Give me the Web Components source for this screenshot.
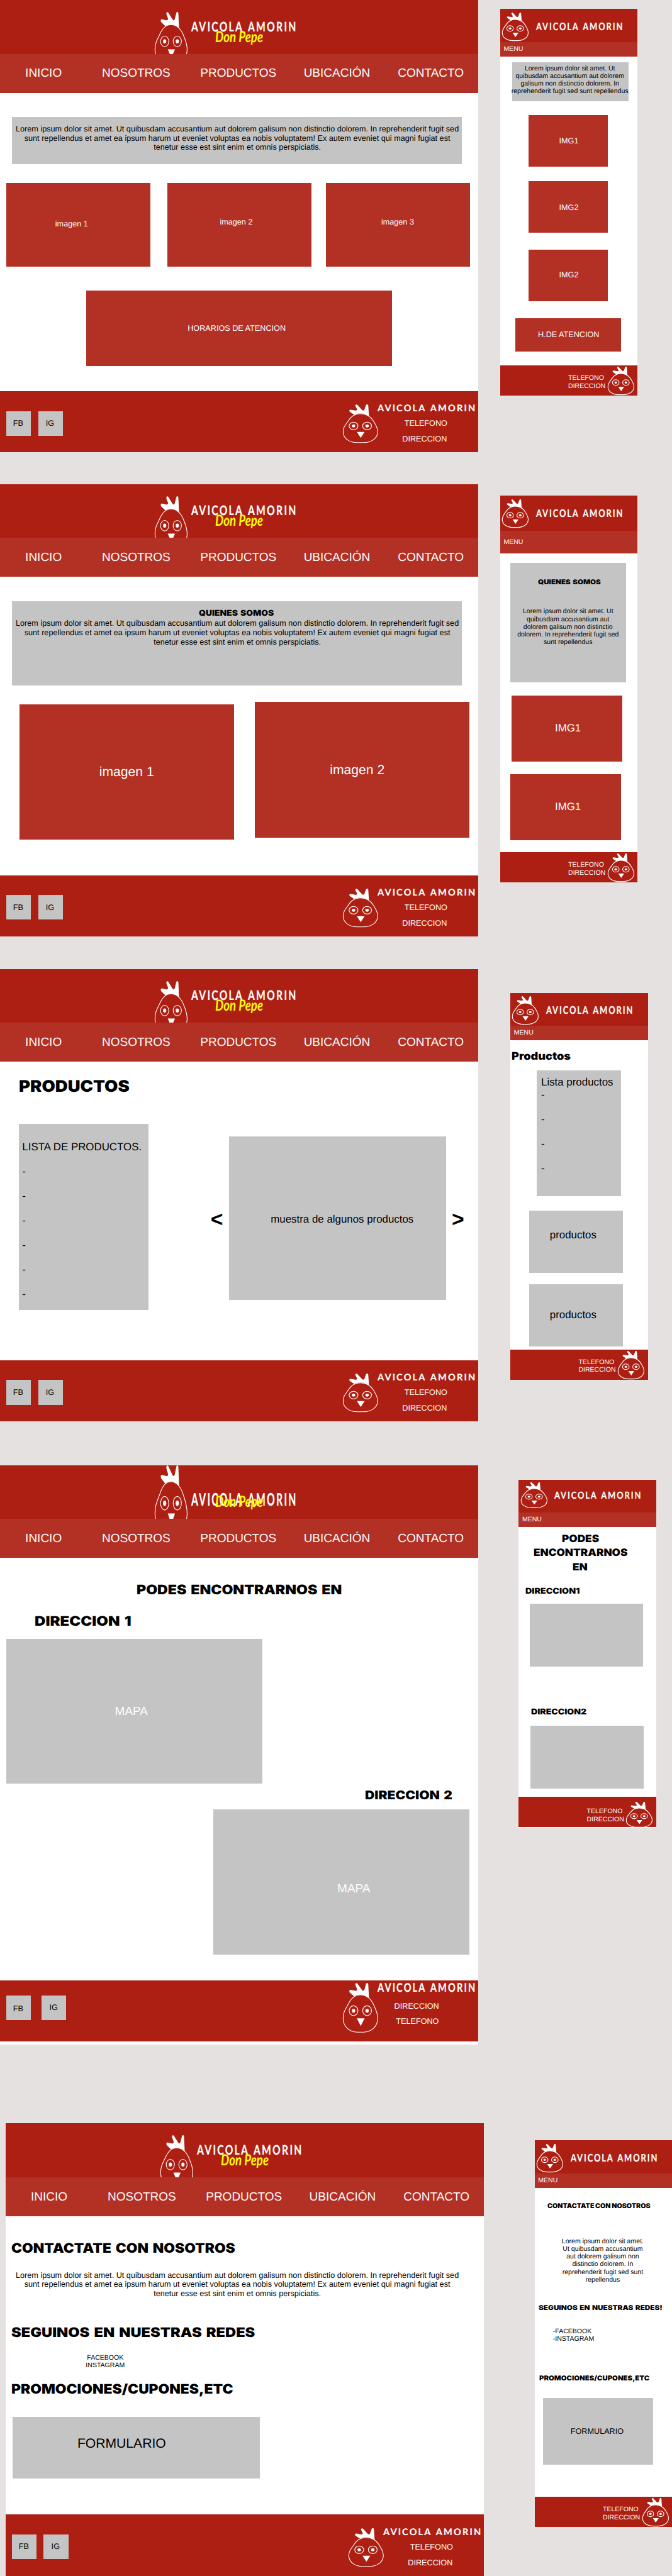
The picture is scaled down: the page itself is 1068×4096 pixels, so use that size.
<!DOCTYPE html>
<html lang="es">
<head>
<meta charset="utf-8">
<title>Avicola Amorin - wireframes</title>
<style>
  /* 1rem = 100 design units */
  html { font-size: 52.78px; background: #e5e1e0; overflow: hidden; }
  body { margin: 0; font-family: "Liberation Sans", Arial, sans-serif; color: #000; overflow: hidden; text-rendering: geometricPrecision; }
</style>
</head>
<body>
<wf-board>
  <wf-desktop slot="desktop">
    <wf-box style="--x:36;--y:73;--w:1354;--h:142"><wf-text center style="--y:22;--w:1357;--s:24;--l:28">Lorem ipsum dolor sit amet. Ut quibusdam accusantium aut dolorem galisum non distinctio dolorem. In reprehenderit fugit sed<br>sunt repellendus et amet ea ipsum harum ut eveniet voluptas ea nobis voluptatem! Ex autem eveniet qui magni fugiat est<br>tenetur esse est sint enim et omnis perspiciatis.</wf-text></wf-box>
    <wf-row style="--y:56">
      <wf-box red style="--x:19.4;--w:434;--h:252"><wf-text style="--x:147;--y:113;--s:24">imagen 1</wf-text></wf-box>
      <wf-box red style="--x:50.6;--w:434;--h:252"><wf-text style="--x:158;--y:107;--s:24">imagen 2</wf-text></wf-box>
      <wf-box red style="--x:43;--w:434;--h:252"><wf-text style="--x:167;--y:107;--s:24">imagen 3</wf-text></wf-box>
    </wf-row>
    <wf-box red style="--x:259;--y:73;--w:922;--h:226"><wf-text style="--x:306;--y:101;--s:24">HORARIOS DE ATENCION</wf-text></wf-box>
  </wf-desktop>

  <wf-desktop slot="desktop" style="--y:95">
    <wf-box style="--x:36;--y:73.4;--w:1354;--h:253">
      <wf-heading style="--x:562.5;--y:26.6;--w:226;--s:24">QUIENES SOMOS</wf-heading>
      <wf-text center style="--y:3;--w:1357;--s:24;--l:28">Lorem ipsum dolor sit amet. Ut quibusdam accusantium aut dolorem galisum non distinctio dolorem. In reprehenderit fugit sed<br>sunt repellendus et amet ea ipsum harum ut eveniet voluptas ea nobis voluptatem! Ex autem eveniet qui magni fugiat est<br>tenetur esse est sint enim et omnis perspiciatis.</wf-text>
    </wf-box>
    <wf-row style="--y:51">
      <wf-box red style="--x:59;--y:7;--w:646.5;--h:408"><wf-text style="--x:240;--y:184;--s:40">imagen 1</wf-text></wf-box>
      <wf-box red style="--x:61;--w:647;--h:408"><wf-text style="--x:227;--y:184;--s:40">imagen 2</wf-text></wf-box>
    </wf-row>
  </wf-desktop>

  <wf-desktop slot="desktop" style="--y:98">
    <wf-heading style="--x:56;--y:50.5;--w:333;--s:48">PRODUCTOS</wf-heading>
    <wf-row style="--y:89">
      <wf-box style="--x:56.4;--w:390;--h:561"><wf-text style="--x:10.6;--y:31.5;--s:32;--l:74">LISTA DE PRODUCTOS.<br>-<br>-<br>-<br>-<br>-<br>-</wf-text></wf-box>
      <wf-text bold style="--x:188;--y:257;--w:37.4;--s:64">&lt;</wf-text>
      <wf-box style="--x:18;--y:36.6;--w:653;--h:493"><wf-text style="--x:125.5;--y:236.5;--s:32">muestra de algunos productos</wf-text></wf-box>
      <wf-text bold style="--x:17.5;--y:257;--w:37.4;--s:64">&gt;</wf-text>
    </wf-row>
  </wf-desktop>

  <wf-desktop slot="desktop" variant="tall" style="--y:132">
    <wf-heading style="--x:411;--y:77;--w:618;--s:40">PODES ENCONTRARNOS EN</wf-heading>
    <wf-heading style="--x:105;--y:55.4;--w:291;--s:40">DIRECCION 1</wf-heading>
    <wf-box style="--x:19.4;--y:30.6;--w:770;--h:437"><wf-text light style="--x:326.6;--y:201;--s:36">MAPA</wf-text></wf-box>
    <wf-heading style="--x:1098;--y:16;--w:263;--s:36">DIRECCION 2</wf-heading>
    <wf-box style="--x:642.7;--y:25.5;--w:771;--h:437"><wf-text light style="--x:373;--y:221.5;--s:36">MAPA</wf-text></wf-box>
  </wf-desktop>

  <wf-desktop slot="desktop" style="--y:237;--x:17">
    <wf-heading style="--x:18;--y:78.7;--w:674;--s:40">CONTACTATE CON NOSOTROS</wf-heading>
    <wf-text center style="--x:20.5;--y:45.7;--w:1354;--s:24;--l:28">Lorem ipsum dolor sit amet. Ut quibusdam accusantium aut dolorem galisum non distinctio dolorem. In reprehenderit fugit sed<br>sunt repellendus et amet ea ipsum harum ut eveniet voluptas ea nobis voluptatem! Ex autem eveniet qui magni fugiat est<br>tenetur esse est sint enim et omnis perspiciatis.</wf-text>
    <wf-heading style="--x:18;--y:82.8;--w:734;--s:40">SEGUINOS EN NUESTRAS REDES</wf-heading>
    <wf-text center style="--x:200;--y:44.5;--w:200;--s:20;--l:23">FACEBOOK<br>INSTAGRAM</wf-text>
    <wf-heading style="--x:17.5;--y:39.7;--w:668;--s:40">PROMOCIONES/CUPONES,ETC</wf-heading>
    <wf-box style="--x:21;--y:63.6;--w:743.6;--h:186"><wf-text style="--x:195;--y:59.5;--s:40">FORMULARIO</wf-text></wf-box>
  </wf-desktop>

  <wf-mobile slot="mobile" style="--y:26.7">
    <wf-box style="--x:37;--y:18;--w:349;--h:117"><wf-text center style="--x:-4;--y:6.7;--w:354;--s:20;--l:23">Lorem ipsum dolor sit amet. Ut<br>quibusdam accusantium aut dolorem<br>galisum non distinctio dolorem. In<br>reprehenderit fugit sed sunt repellendus</wf-text></wf-box>
    <wf-box red style="--x:85;--y:41.6;--w:239;--h:156"><wf-text style="--x:92.4;--y:66;--s:24">IMG1</wf-text></wf-box>
    <wf-box red style="--x:85;--y:42.4;--w:239;--h:156"><wf-text style="--x:92.4;--y:68.3;--s:24">IMG2</wf-text></wf-box>
    <wf-box red style="--x:85;--y:51;--w:239;--h:156"><wf-text style="--x:92.4;--y:65.2;--s:24">IMG2</wf-text></wf-box>
    <wf-box red style="--x:46;--y:51;--w:318;--h:99.6"><wf-text style="--x:68;--y:37.7;--s:24">H.DE ATENCION</wf-text></wf-box>
  </wf-mobile>

  <wf-mobile slot="mobile" style="--y:301.4;--head:106;--nav:67.5;--menu:24.7">
    <wf-box style="--x:30;--y:28;--w:349;--h:361">
      <wf-heading style="--x:83.5;--y:49.4;--w:189;--s:20">QUIENES SOMOS</wf-heading>
      <wf-text center style="--y:66.8;--w:349;--s:20;--l:23">Lorem ipsum dolor sit amet. Ut<br>quibusdam accusantium aut<br>dolorem galisum non distinctio<br>dolorem. In reprehenderit fugit sed<br>sunt repellendus</wf-text>
    </wf-box>
    <wf-box red style="--x:34;--y:40;--w:334;--h:198.5"><wf-text style="--x:131;--y:83.5;--s:32">IMG1</wf-text></wf-box>
    <wf-box red style="--x:30;--y:37.7;--w:334;--h:198.5"><wf-text style="--x:135;--y:83.5;--s:32">IMG1</wf-text></wf-box>
  </wf-mobile>

  <wf-mobile slot="mobile" style="--y:332.1;--x:31">
    <wf-heading style="--x:3.5;--y:34.4;--w:178;--s:32">Productos</wf-heading>
    <wf-box style="--x:80;--y:24;--w:254;--h:379"><wf-text style="--x:12.5;--y:18.2;--s:32;--l:37">Lista productos<br>-<br><br>-<br><br>-<br><br>-</wf-text></wf-box>
    <wf-box style="--x:57;--y:43;--w:281;--h:187.5"><wf-text style="--x:61.6;--y:59.2;--s:32">productos</wf-text></wf-box>
    <wf-box style="--x:57;--y:35.3;--w:281;--h:187.5"><wf-text style="--x:61.6;--y:77.2;--s:32">productos</wf-text></wf-box>
  </wf-mobile>

  <wf-mobile slot="mobile" style="--y:301.4;--x:56;--main:956;--tail:2;--chick:77;--chick-top:9;--word-top:37;--word-h:21;--foot-top:14;--contact-top:33.6">
    <wf-heading style="--x:130;--y:20.6;--w:112;--s:30">PODES</wf-heading>
    <wf-heading style="--x:44.5;--y:12.3;--w:283;--s:30">ENCONTRARNOS</wf-heading>
    <wf-heading style="--x:163;--y:12.3;--w:45;--s:30">EN</wf-heading>
    <wf-heading style="--x:20;--y:48.4;--w:164;--s:24">DIRECCION1</wf-heading>
    <wf-box style="--x:34;--y:22.7;--w:341;--h:189.4"></wf-box>
    <wf-heading style="--x:37.5;--y:126.6;--w:167;--s:24">DIRECCION2</wf-heading>
    <wf-box style="--x:36;--y:29;--w:341;--h:189.4"></wf-box>
  </wf-mobile>

  <wf-mobile slot="mobile" style="--y:941.2;--x:104">
    <wf-heading style="--x:37.5;--y:46.2;--w:310;--s:20;word-spacing:-.04em">CONTACTATE CON NOSOTROS</wf-heading>
    <wf-text center style="--x:5;--y:84.1;--w:400;--s:20;--l:23">Lorem ipsum dolor sit amet.<br>Ut quibusdam accusantium<br>aut dolorem galisum non<br>distinctio dolorem. In<br>reprehenderit fugit sed sunt<br>repellendus</wf-text>
    <wf-heading style="--x:11.5;--y:64.7;--w:373;--s:20">SEGUINOS EN NUESTRAS REDES!</wf-heading>
    <wf-text style="--x:55;--y:48.7;--s:20;--l:23">-FACEBOOK<br>-INSTAGRAM</wf-text>
    <wf-heading style="--x:14.5;--y:97.8;--w:332;--s:20">PROMOCIONES/CUPONES,ETC</wf-heading>
    <wf-box style="--x:26;--y:48.3;--w:330;--h:200"><wf-text style="--x:82;--y:88;--s:24">FORMULARIO</wf-text></wf-box>
  </wf-mobile>
</wf-board>

<script>
// Every block is placed in flow: --x and --y are its leading gaps, --w and --h its size.
const GEOMETRY = `
  box-sizing: border-box;
  margin: calc(var(--y, 0) * .01rem) 0 0 calc(var(--x, 0) * .01rem);
`;

function define(name, html, setup) {
  const tpl = document.createElement('template');
  tpl.innerHTML = html;
  customElements.define(name, class extends HTMLElement {
    connectedCallback() {
      if (this.shadowRoot) return;
      // Custom properties inherit, so a host without its own gaps resets them.
      for (const p of ['--x', '--y']) {
        if (!this.style.getPropertyValue(p)) this.style.setProperty(p, '0');
      }
      this.attachShadow({ mode: 'open' }).append(tpl.content.cloneNode(true));
      if (setup) setup.call(this, this.shadowRoot);
    }
  });
}

define('wf-board', `
  <style>
    :host { display: flex; align-items: flex-start; width: 20.24rem; height: 77.6rem; overflow: hidden; }
    .desktop { width: 15.06rem; flex: none; display: flex; flex-direction: column; align-items: flex-start; }
    .mobile { flex: none; display: flex; flex-direction: column; align-items: flex-start; }
  </style>
  <div class="desktop"><slot name="desktop"></slot></div>
  <div class="mobile"><slot name="mobile"></slot></div>`);

define('wf-row', `
  <style>:host { display: flex; align-items: flex-start; ${GEOMETRY} }</style>
  <slot></slot>`);

define('wf-box', `
  <style>
    :host { display: flow-root; flex: none; ${GEOMETRY}
      width: calc(var(--w) * .01rem); height: calc(var(--h) * .01rem);
      background: #c4c4c4; color: #000; }
    :host([red]) { background: #b33025; color: #fff; }
  </style><slot></slot>`);

define('wf-text', `
  <style>
    :host { display: block; flex: none; white-space: nowrap; ${GEOMETRY}
      font-size: calc(var(--s) * .01rem); line-height: calc(var(--l) * .01rem); }
    :host([center]) { text-align: center; width: calc(var(--w) * .01rem); }
    :host([bold]) { font-weight: 700; width: calc(var(--w) * .01rem); }
    :host([light]) { color: #fff; }
  </style><slot></slot>`, function () {
  if (!this.style.getPropertyValue('--l')) this.style.setProperty('--l', this.style.getPropertyValue('--s'));
});

// Black display heading stretched to the width given by --w.
define('wf-heading', `
  <style>
    :host { display: block; white-space: nowrap; ${GEOMETRY} word-spacing: .1em;
      width: calc(var(--w) * .01rem); height: calc(var(--s) * .01rem);
      font: 900 calc(var(--s) * .01rem)/1 Inter, "Liberation Sans", sans-serif; }
    span { display: inline-block; transform-origin: 0 0; }
  </style><span><slot></slot></span>`, function (root) {
  const span = root.querySelector('span');
  const target = this.getBoundingClientRect().width;
  span.style.transform = 'scaleX(' + target / span.getBoundingClientRect().width + ')';
});

define('wf-chick', `
  <style>
    :host { display: block; flex: none; }
    svg { display: block; width: 100%; height: 100%; overflow: visible; }
    .line { fill: none; stroke: #fff; stroke-width: 1.1px; vector-effect: non-scaling-stroke; }
  </style>
  <svg viewBox="36 41 316 347" preserveAspectRatio="none" fill="#fff" aria-hidden="true">
    <path d="M138 135 L99 109 C89 99 95 87 108 90 L146 96 C160 98 168 92 163 82 L149 56 C145 44 158 37 168 46 L208 91 C216 99 227 97 231 86 L244 50 C248 38 264 38 265 52 L272 151 C245 130 225 124 195 124 C172 124 155 127 138 135Z"/>
    <path class="line" d="M193 125 C145 125 114 143 86 187 C60 226 38 246 38 288 C38 345 90 386 165 386 L222 386 C297 386 350 345 350 288 C350 246 330 222 309 187 C280 143 242 125 193 125Z"/>
    <ellipse class="line" cx="132" cy="236" rx="40" ry="34.5"/><ellipse class="line" cx="254.500" cy="236" rx="40" ry="34.5"/>
    <ellipse cx="132" cy="236" rx="15.500" ry="13.500"/><ellipse cx="254.500" cy="236" rx="15.500" ry="13.500"/>
    <path d="M162 289 H232 L197 343Z"/>
  </svg>`);

define('wf-wordmark', `
  <style>
    :host { display: block; flex: none; }
    svg { display: block; width: 100%; height: 100%; overflow: visible; }
    text { font: 700 27.7px Lato, sans-serif; fill: #fff; stroke: #fff; stroke-width: .3px; word-spacing: 3px; }
  </style>
  <svg viewBox="0 0 291 20" preserveAspectRatio="none"><text x="0" y="20" textLength="294">AVICOLA AMORIN</text></svg>`);

define('wf-script', `
  <style>
    :host { display: block; }
    svg { display: block; width: 100%; height: 100%; overflow: visible; }
    text { font: italic 700 46px Lato, sans-serif; fill: #ff0; }
  </style>
  <svg viewBox="0 0 144 46" preserveAspectRatio="none"><text x="0" y="34" textLength="144" lengthAdjust="spacingAndGlyphs">Don Pepe</text></svg>`);

define('wf-desktop', `
  <style>
    :host { display: flex; flex-direction: column; ${GEOMETRY} width: 14.4rem; background: #fff;
      --chick-y: 36; --chick-h: 158; --word-y: 65.500; --word-h: 28.700; --main: 899; --tail: 0;
      --fchick-y: 40; --fchick-h: 115.700; --fword-y: 40; --fword-h: 20; --social-y: 60; --social-gap: 21.300; }
    :host([variant=tall]) { --chick-y: 0; --chick-h: 203; --word-y: 84; --word-h: 37.500; --main: 1272; --tail: 10;
      --fchick-y: 9; --fchick-h: 149; --fword-y: 9; --fword-h: 26; --social-y: 46.500; --social-gap: 32.400; }
    header { display: flex; align-items: flex-start; height: 1.62rem; overflow: hidden; background: #ad1f12; padding-left: 4.66rem; box-sizing: border-box; }
    header wf-chick { width: .98rem; height: calc(var(--chick-h) * .01rem); margin-top: calc(var(--chick-y) * .01rem); }
    .name { display: grid; margin-left: .12rem; width: 3.12rem; }
    .name > * { grid-area: 1 / 1; }
    .name wf-wordmark { height: calc(var(--word-h) * .01rem); margin-top: calc(var(--word-y) * .01rem); }
    .name wf-script { width: 1.44rem; height: .46rem; margin: .92rem 0 0 .72rem; }
    nav { display: grid; grid-template-columns: 2.31rem 2.96rem 3.115rem 2.835rem auto; height: 1.18rem; box-sizing: border-box;
      padding: .415rem 0 0 .76rem; background: #b33025; color: #fff; font-size: .36rem; line-height: .36rem; white-space: nowrap; }
    main { display: flow-root; height: calc(var(--main) * .01rem); }
    footer { display: flex; align-items: flex-start; height: 1.84rem; box-sizing: border-box; background: #ad1f12; color: #fff;
      margin-bottom: calc(var(--tail) * .01rem); padding-left: .194rem; }
    .social { display: flex; gap: calc(var(--social-gap) * .01rem); margin-top: calc(var(--social-y) * .01rem); width: 10.126rem; flex: none; }
    footer wf-chick { width: 1.053rem; height: calc(var(--fchick-h) * .01rem); margin-top: calc(var(--fchick-y) * .01rem); }
    footer wf-wordmark { width: 2.91rem; height: calc(var(--fword-h) * .01rem); margin-top: calc(var(--fword-y) * .01rem); }
    .contact { display: flex; flex-direction: column; }
  </style>
  <header>
    <wf-chick></wf-chick>
    <div class="name"><wf-wordmark></wf-wordmark><wf-script></wf-script></div>
  </header>
  <nav><span>INICIO</span><span>NOSOTROS</span><span>PRODUCTOS</span><span>UBICACIÓN</span><span>CONTACTO</span></nav>
  <main><slot></slot></main>
  <footer>
    <div class="social">
      <wf-box style="--w:74;--h:74"><wf-text class="fb" style="--x:20;--y:25;--s:24">FB</wf-text></wf-box>
      <wf-box style="--w:74;--h:74"><wf-text style="--x:23;--y:25;--s:24">IG</wf-text></wf-box>
    </div>
    <wf-chick></wf-chick>
    <div class="contact">
      <wf-wordmark></wf-wordmark>
      <wf-text class="one" style="--x:80.500;--y:25.500;--s:24">TELEFONO</wf-text>
      <wf-text class="two" style="--x:74;--y:23.300;--s:24">DIRECCION</wf-text>
    </div>
  </footer>`, function (root) {
  if (this.getAttribute('variant') !== 'tall') return;
  const one = root.querySelector('.one'), two = root.querySelector('.two');
  one.textContent = 'DIRECCION';
  one.style.setProperty('--x', 50); one.style.setProperty('--y', 31);
  two.textContent = 'TELEFONO';
  two.style.setProperty('--x', 55); two.style.setProperty('--y', 22.5);
  root.querySelector('.fb').style.setProperty('--y', 28.6);
});

define('wf-mobile', `
  <style>
    :host { display: flex; flex-direction: column; ${GEOMETRY} width: 4.14rem;
      height: calc((var(--main, 1074.3) + 91 + var(--tail, 0)) * .01rem); background: #fff; }
    .top { display: flex; flex-direction: column; height: calc(var(--main, 1074.3) * .01rem); }
    header { display: flex; flex: none; align-items: flex-start; height: calc(var(--head, 100) * .01rem); background: #ad1f12; }
    wf-chick { width: .79rem; height: calc(var(--chick, 85) * .01rem); }
    header wf-chick { margin: calc(var(--chick-top, 11) * .01rem) 0 0 .06rem; }
    wf-wordmark { width: 2.577rem; height: calc(var(--word-h, 22.7) * .01rem); margin: calc(var(--word-top, 41.5) * .01rem) 0 0 .232rem; }
    nav { flex: none; height: calc(var(--nav, 43.4) * .01rem); box-sizing: border-box; padding: calc(var(--menu, 11.3) * .01rem) 0 0 .105rem;
      background: #b33025; color: #fff; font-size: .2rem; line-height: .2rem; }
    main { display: flow-root; flex: 1; }
    footer { display: flex; align-items: flex-start; height: .91rem; background: #ad1f12; color: #fff; }
    .contact { width: 1.19rem; flex: none; margin: calc(var(--contact-top, 28.5) * .01rem) 0 0 2.05rem; font-size: .2rem; line-height: .2rem; display: grid; gap: .043rem; }
    footer wf-chick { margin-top: calc(var(--foot-top, 4) * .01rem); }
  </style>
  <div class="top">
    <header><wf-chick></wf-chick><wf-wordmark></wf-wordmark></header>
    <nav>MENU</nav>
    <main><slot></slot></main>
  </div>
  <footer><div class="contact"><span>TELEFONO</span><span>DIRECCION</span></div><wf-chick></wf-chick></footer>`);
</script>
</body>
</html>
